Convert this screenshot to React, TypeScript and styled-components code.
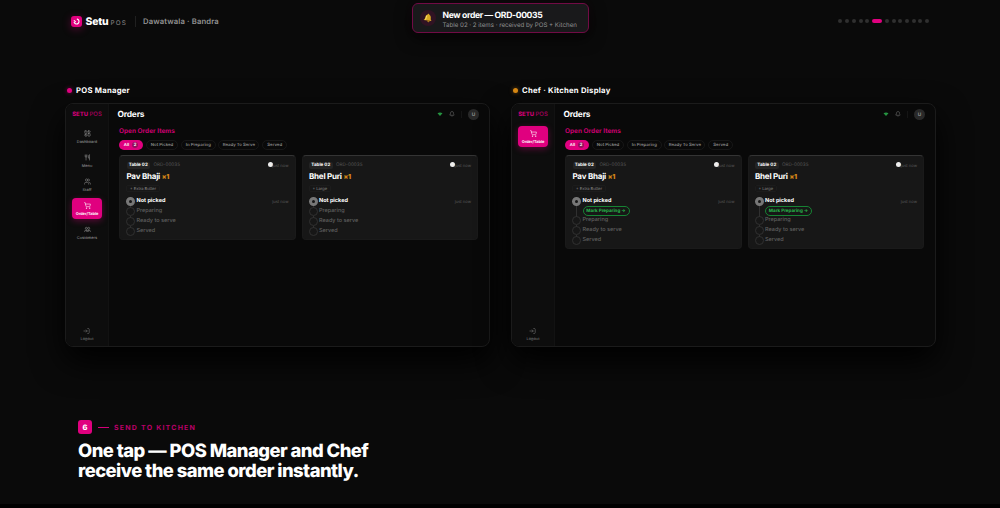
import React from "react";
import styled, { createGlobalStyle, css } from "styled-components";
import { LayoutDashboard, Users, ShoppingCart, Bell } from "lucide-react";

const pink = "#e0007f";

type NavItem = { label: string; icon: React.ReactNode };
type Item = { name: string; note: string; noteWidth: number };

const filters = [
	{ label: "Not Picked", width: 32.5 },
	{ label: "In Preparing", width: 34.5 },
	{ label: "Ready To Serve", width: 41 },
	{ label: "Served", width: 25 },
];

const items: Item[] = [
	{ name: "Pav Bhaji", note: "+ Extra Butter", noteWidth: 34 },
	{ name: "Bhel Puri", note: "+ Large", noteWidth: 22 },
];

const managerNav: NavItem[] = [
	{ label: "Dashboard", icon: <LayoutDashboard size={7} /> },
	{ label: "Menu", icon: <MenuGlyph /> },
	{ label: "Staff", icon: <Users size={7} /> },
	{ label: "Order/Table", icon: <ShoppingCart size={7} /> },
	{ label: "Customers", icon: <CustomersGlyph /> },
];

const chefNav: NavItem[] = [{ label: "Order/Table", icon: <ShoppingCart size={7} /> }];

export default function App() {
	return (
		<Page>
			<GlobalStyle />
			{/* SECTION Header */}
			<Header>
				<Logo>
					<svg width="7" height="7" viewBox="0 0 14 14" fill="none" stroke="#fff" strokeWidth="2.2" strokeLinecap="round">
						<path d="M8.5 2.2A5 5 0 1 1 2.3 8.5" />
						<path d="M2.4 5.2L4.8 7.2" />
					</svg>
				</Logo>
				<Brand>Setu</Brand>
				<BrandSuffix>POS</BrandSuffix>
				<Divider />
				<Outlet>Dawatwala · Bandra</Outlet>
				<Dots>
					{Array.from({ length: 13 }, (_, i) => (
						<Dot key={i} $active={i === 5} />
					))}
				</Dots>
			</Header>

			<Toast>
				<ToastIcon>
					<BellGlyph />
				</ToastIcon>
				<div>
					<ToastTitle>New order — ORD-00035</ToastTitle>
					<ToastText>Table 02 · 2 items · received by POS + Kitchen</ToastText>
				</div>
			</Toast>

			{/* SECTION Screens */}
			<Screens>
				<Screen title="POS Manager" color={pink} nav={managerNav} />
				<Screen title="Chef · Kitchen Display" color="#d58612" nav={chefNav} chef />
			</Screens>

			{/* SECTION Caption */}
			<Caption>
				<Step>
					<StepNumber>6</StepNumber>
					<StepLine />
					<StepLabel>SEND TO KITCHEN</StepLabel>
				</Step>
				<Headline>
					One tap — POS Manager and Chef
					<br />
					receive the same order instantly.
				</Headline>
			</Caption>
		</Page>
	);
}

function Screen({ title, color, nav, chef = false }: { title: string; color: string; nav: NavItem[]; chef?: boolean }) {
	return (
		<div>
			<ScreenTitle>
				<StatusDot $color={color} />
				{title}
			</ScreenTitle>
			<Window>
				<Sidebar>
					<SideBrand>
						SETU <span>POS</span>
					</SideBrand>
					<Nav>
						{nav.map(({ label, icon }) => (
							<NavButton key={label} $active={label === "Order/Table"}>
								{icon}
								<span>{label}</span>
							</NavButton>
						))}
					</Nav>
					<Logout>
						<LogoutGlyph />
						<span>Logout</span>
					</Logout>
				</Sidebar>
				<Main>
					<TopBar>
						<PageTitle>Orders</PageTitle>
						<WifiGlyph />
						<Bell size={6} color="#777" />
						<TopDivider />
						<Avatar>U</Avatar>
					</TopBar>
					<Content>
						<SectionTitle>Open Order Items</SectionTitle>
						<Filters>
							<ActivePill>
								All <Count>2</Count>
							</ActivePill>
							{filters.map(({ label, width }) => (
								<Pill key={label} $width={width}>
									{label}
								</Pill>
							))}
						</Filters>
						<Cards>
							{items.map((item) => (
								<OrderCard key={item.name} item={item} chef={chef} />
							))}
						</Cards>
					</Content>
				</Main>
			</Window>
		</div>
	);
}

function OrderCard({ item, chef }: { item: Item; chef: boolean }) {
	return (
		<Card $tall={chef}>
			<CardTop>
				<TableTag>Table 02</TableTag>
				<OrderId>ORD-00035</OrderId>
				<Blip />
				<Ago>just now</Ago>
			</CardTop>
			<ItemName>
				{item.name} <b>×1</b>
			</ItemName>
			<Note $width={item.noteWidth}>{item.note}</Note>
			<Stage $height={chef ? 19 : 10}>
				<Ring $current $line={chef ? 11 : 2} />
				<StageBody>
					<StageName $current>Not picked</StageName>
					{chef && <MarkButton>Mark Preparing →</MarkButton>}
				</StageBody>
				<Ago>just now</Ago>
			</Stage>
			{["Preparing", "Ready to serve", "Served"].map((name, i) => (
				<Stage key={name} $height={10.2}>
					<Ring $line={i < 2 ? 2 : 0} />
					<StageName>{name}</StageName>
				</Stage>
			))}
		</Card>
	);
}

function BellGlyph() {
	return (
		<svg width="10" height="10" viewBox="0 0 18 18">
			<g transform="rotate(8 9 9)">
				<path d="M9 1.500c1 0 1.500.7 1.500 1.500 3 1 3.500 4 3.500 6 0 2 1 3.200 2.300 4.500H1.700C3 12.200 4 11 4 9c0-2 .5-5 3.500-6 0-.8.500-1.500 1.500-1.500z" fill="#d9a923" />
				<path d="M6.500 5c-1 2-.5 5-1.500 7.500" stroke="#ffe477" strokeWidth="1.600" fill="none" />
				<circle cx="10.500" cy="14.500" r="2" fill="#a9781a" />
			</g>
		</svg>
	);
}

function WifiGlyph() {
	return (
		<svg width="6" height="6" viewBox="0 0 12 12">
			<path d="M1 4.500Q6 1 11 4.500L6 10z" fill="#259340" />
		</svg>
	);
}

// fork and knife
function MenuGlyph() {
	return (
		<svg width="7" height="7" viewBox="0 0 24 24" fill="none" stroke="currentColor" strokeWidth="2">
			<path d="M4 2v6q0 3 3 3t3-3V2M7 2v20M19 22V2q-4 2-4 8v4h4" />
		</svg>
	);
}

function CustomersGlyph() {
	return (
		<svg width="7" height="7" viewBox="0 0 24 24" fill="none" stroke="currentColor" strokeWidth="2">
			<circle cx="8" cy="8" r="3.500" />
			<circle cx="16" cy="8" r="3.500" />
			<path d="M1.500 20q0-6 6.500-6 4 0 4 5 0-5 4-5 6.500 0 6.500 6M8 14v6M16 14v6" />
		</svg>
	);
}

function LogoutGlyph() {
	return (
		<svg width="7" height="6" viewBox="0 0 24 22" fill="none" stroke="currentColor" strokeWidth="2">
			<path d="M1 11h14M10 6l5 5-5 5M15 2h4q3 0 3 3v12q0 3-3 3h-4" />
		</svg>
	);
}

const GlobalStyle = createGlobalStyle`
	* {
		box-sizing: border-box;
	}
	body {
		margin: 0;
		background: #000;
		text-rendering: geometricPrecision;
	}
`;

const Page = styled.main`
	position: relative;
	width: 1000px;
	height: 508px;
	overflow: hidden;
	background: #0a0a0a;
	border-bottom: 4px solid #000;
	color: #fff;
	font-family: Inter, "Liberation Sans", sans-serif;
	white-space: nowrap;
`;

const Header = styled.header`
	display: flex;
	align-items: center;
	height: 43px;
	padding: 0 71px;
`;

const Logo = styled.div`
	display: grid;
	place-items: center;
	width: 11px;
	height: 11px;
	border-radius: 3px;
	background: ${pink};
	box-shadow: 0 2px 8px rgba(224, 0, 127, 0.35);
`;

const Brand = styled.div`
	width: 25px;
	margin-left: 3.5px;
	font-size: 10.4px;
	font-weight: 800;
	letter-spacing: -0.2px;
`;

const BrandSuffix = styled.div`
	width: 24.5px;
	padding-top: 2px;
	color: #777;
	font-size: 6.4px;
	font-weight: 500;
	letter-spacing: 1.1px;
`;

const Divider = styled.div`
	width: 1px;
	height: 11px;
	background: #202020;
`;

const Outlet = styled.div`
	margin-left: 7px;
	color: #929292;
	font-size: 7.7px;
	font-weight: 600;
	letter-spacing: 0.12px;
`;

const Dots = styled.div`
	display: flex;
	gap: 2.7px;
	margin: 0 0 1px auto;
`;

const Dot = styled.i<{ $active: boolean }>`
	width: ${({ $active }) => ($active ? 10.3 : 4)}px;
	height: 4px;
	border-radius: 2px;
	background: ${({ $active }) => ($active ? pink : "#303030")};
`;

const Toast = styled.div`
	position: absolute;
	top: 3px;
	left: 411.5px;
	display: flex;
	align-items: center;
	width: 177px;
	height: 30px;
	padding-left: 7px;
	border: 1px solid #710b45;
	border-radius: 6px;
	background: #19191b;
	box-shadow: 0 5px 16px rgba(0, 0, 0, 0.7), 0 0 10px rgba(224, 0, 127, 0.06);
`;

const ToastIcon = styled.div`
	display: grid;
	place-items: center;
	width: 16px;
	height: 16px;
	margin-right: 7px;
	border-radius: 50%;
	background: #301323;
`;

const ToastTitle = styled.div`
	padding-top: 3px;
	font-size: 8.6px;
	font-weight: 700;
	line-height: 11px;
	letter-spacing: -0.34px;
`;

const ToastText = styled.div`
	color: #929292;
	font-size: 6.15px;
	line-height: 7px;
`;

const Screens = styled.section`
	display: flex;
	gap: 21px;
	padding: 41px 65px 0;
`;

const ScreenTitle = styled.h2`
	display: flex;
	align-items: center;
	gap: 4px;
	height: 12px;
	margin: 0 0 7px;
	padding-left: 2px;
	font-size: 7.7px;
	font-weight: 700;
	letter-spacing: 0.25px;
`;

const StatusDot = styled.i<{ $color: string }>`
	width: 5px;
	height: 5px;
	border-radius: 50%;
	background: ${({ $color }) => $color};
	box-shadow: 0 0 4px ${({ $color }) => $color}88;
`;

const Window = styled.div`
	display: flex;
	width: 425px;
	height: 244px;
	overflow: hidden;
	border: 1px solid #1b1b1b;
	border-radius: 8px;
	background: #090909;
	box-shadow: 0 14px 32px #000;
`;

const Sidebar = styled.aside`
	display: flex;
	flex-direction: column;
	align-items: center;
	width: 43px;
	padding: 7px 0 5px;
	border-right: 1px solid #121212;
	background: #0d0d0d;
`;

const SideBrand = styled.div`
	color: #c90072;
	font-size: 6px;
	font-weight: 800;
	line-height: 7px;

	span {
		color: #a6005f;
		font-weight: 500;
	}
`;

const Nav = styled.nav`
	display: flex;
	flex-direction: column;
	gap: 3px;
	margin-top: 8px;
`;

const NavButton = styled.div<{ $active: boolean }>`
	display: flex;
	flex-direction: column;
	align-items: center;
	justify-content: center;
	gap: 2px;
	width: 30px;
	height: 21px;
	border-radius: 4px;
	color: #8b8b8b;
	font-size: 3.9px;
	font-weight: 500;
	line-height: 5px;

	${({ $active }) =>
		$active &&
		css`
			background: ${pink};
			box-shadow: 0 2px 6px rgba(224, 0, 127, 0.35);
			color: #fff;
			font-weight: 700;
		`}
`;

const Logout = styled.div`
	display: flex;
	flex-direction: column;
	align-items: center;
	gap: 2px;
	margin-top: auto;
	color: #808080;
	font-size: 3.9px;
	line-height: 5px;
`;

const Main = styled.div`
	flex: 1;
`;

const TopBar = styled.div`
	display: flex;
	align-items: center;
	height: 20px;
	padding: 0 10px 0 8.5px;
`;

const PageTitle = styled.h3`
	flex: 1;
	margin: 1px 0 0;
	font-size: 8.4px;
	font-weight: 700;
	letter-spacing: -0.2px;

	& ~ svg {
		margin-right: 6px;
	}
`;

const TopDivider = styled.i`
	width: 1px;
	height: 7px;
	margin-right: 6px;
	background: #151515;
`;

const Avatar = styled.div`
	width: 11px;
	height: 11px;
	border-radius: 50%;
	background: #292929;
	color: #999;
	font-size: 4.8px;
	font-weight: 600;
	line-height: 12px;
	text-align: center;
`;

const Content = styled.div`
	padding: 3px 11px 0 10px;
`;

const SectionTitle = styled.div`
	height: 12.5px;
	color: #c8006f;
	font-size: 6.5px;
	font-weight: 700;
	line-height: 9px;
`;

const Filters = styled.div`
	display: flex;
	gap: 2.8px;
	height: 10px;
`;

const pillBase = css`
	display: flex;
	align-items: center;
	justify-content: center;
	padding-top: 1px;
	border-radius: 5px;
	font-size: 4.3px;
	font-weight: 600;
`;

const ActivePill = styled.div`
	${pillBase}
	gap: 3px;
	width: 24px;
	background: ${pink};
`;

const Count = styled.span`
	width: 6px;
	height: 6px;
	margin-top: -1px;
	border-radius: 3px;
	background: #94105f;
	line-height: 7px;
	text-align: center;
`;

const Pill = styled.div<{ $width: number }>`
	${pillBase}
	width: ${({ $width }) => $width}px;
	border: 1px solid #171717;
	color: #8d8d8d;
`;

const Cards = styled.div`
	display: grid;
	grid-template-columns: 1fr 1fr;
	align-items: start;
	gap: 6px;
	margin-top: 5px;
`;

const Card = styled.article<{ $tall: boolean }>`
	height: ${({ $tall }) => ($tall ? 94.5 : 85.5)}px;
	padding: 5px 6px 0;
	border: 1px solid #1a1a1a;
	border-top-color: #343434;
	border-radius: 4px;
	background: #171717;
`;

const CardTop = styled.div`
	display: flex;
	align-items: center;
	height: 8px;
`;

const TableTag = styled.div`
	width: 23.5px;
	height: 7px;
	margin: 1px 3.5px 0 0.5px;
	border-radius: 2px;
	background: #242424;
	font-size: 4.5px;
	font-weight: 700;
	line-height: 8px;
	text-align: center;
`;

const OrderId = styled.div`
	padding-top: 1px;
	color: #585858;
	font-size: 4.6px;
	letter-spacing: 0.03px;
`;

const Blip = styled.i`
	width: 5px;
	height: 5px;
	margin-left: auto;
	border-radius: 50%;
	background: #eee;
`;

const Ago = styled.div`
	margin-left: auto;
	color: #5c5c5c;
	font-size: 4.1px;

	${Blip} + & {
		margin-left: -0.5px;
		padding-top: 1px;
	}
`;

const ItemName = styled.div`
	height: 14px;
	padding: 2px 0 0 0.5px;
	font-size: 8px;
	font-weight: 700;
	line-height: 11px;
	letter-spacing: -0.22px;

	b {
		color: #cf8217;
		font-size: 6.8px;
	}
`;

const Note = styled.div<{ $width: number }>`
	width: ${({ $width }) => $width}px;
	height: 7px;
	margin: 2px 0 5px;
	padding: 0 3px;
	border: 1px solid #1c1c1c;
	border-radius: 2px;
	color: #8b8b8b;
	font-size: 4px;
	line-height: 5px;
`;

const Stage = styled.div<{ $height: number }>`
	display: flex;
	align-items: flex-start;
	height: ${({ $height }) => $height}px;
	line-height: 9px;
`;

const Ring = styled.i<{ $current?: boolean; $line: number }>`
	position: relative;
	flex: none;
	width: 9px;
	height: 9px;
	margin-right: 1.5px;
	border: ${({ $current }) => ($current ? "3px solid #777" : "1px solid #303030")};
	border-radius: 50%;

	&::after {
		content: "";
		position: absolute;
		top: ${({ $current }) => ($current ? 6 : 8)}px;
		left: ${({ $current }) => ($current ? 1 : 3)}px;
		width: 1px;
		height: ${({ $line }) => $line}px;
		background: #303030;
	}
`;

const StageBody = styled.div`
	height: 19px;
`;

const StageName = styled.div<{ $current?: boolean }>`
	color: ${({ $current }) => ($current ? "#fff" : "#606060")};
	font-size: 5.5px;
	font-weight: ${({ $current }) => ($current ? 700 : 500)};
	line-height: 8px;
`;

const MarkButton = styled.div`
	width: 47px;
	height: 10px;
	margin-top: 1px;
	border: 1px solid #168333;
	border-radius: 5px;
	color: #27b94c;
	font-size: 4.5px;
	font-weight: 700;
	line-height: 9px;
	text-align: center;
`;

const Caption = styled.section`
	padding: 73px 78px 0;
`;

const Step = styled.div`
	display: flex;
	align-items: center;
	height: 14px;
`;

const StepNumber = styled.div`
	width: 14px;
	height: 14px;
	border-radius: 3px;
	background: ${pink};
	font-size: 7.5px;
	font-weight: 800;
	line-height: 15px;
	text-align: center;
`;

const StepLine = styled.i`
	width: 11px;
	height: 1px;
	margin: 1px 5px 0 6px;
	background: #d40078;
`;

const StepLabel = styled.div`
	padding-top: 1px;
	color: #b90068;
	font-size: 7px;
	font-weight: 700;
	letter-spacing: 1.22px;
`;

const Headline = styled.h1`
	margin: 7px 0 0;
	font-size: 18.4px;
	font-weight: 800;
	line-height: 20px;
	letter-spacing: -0.55px;
`;
